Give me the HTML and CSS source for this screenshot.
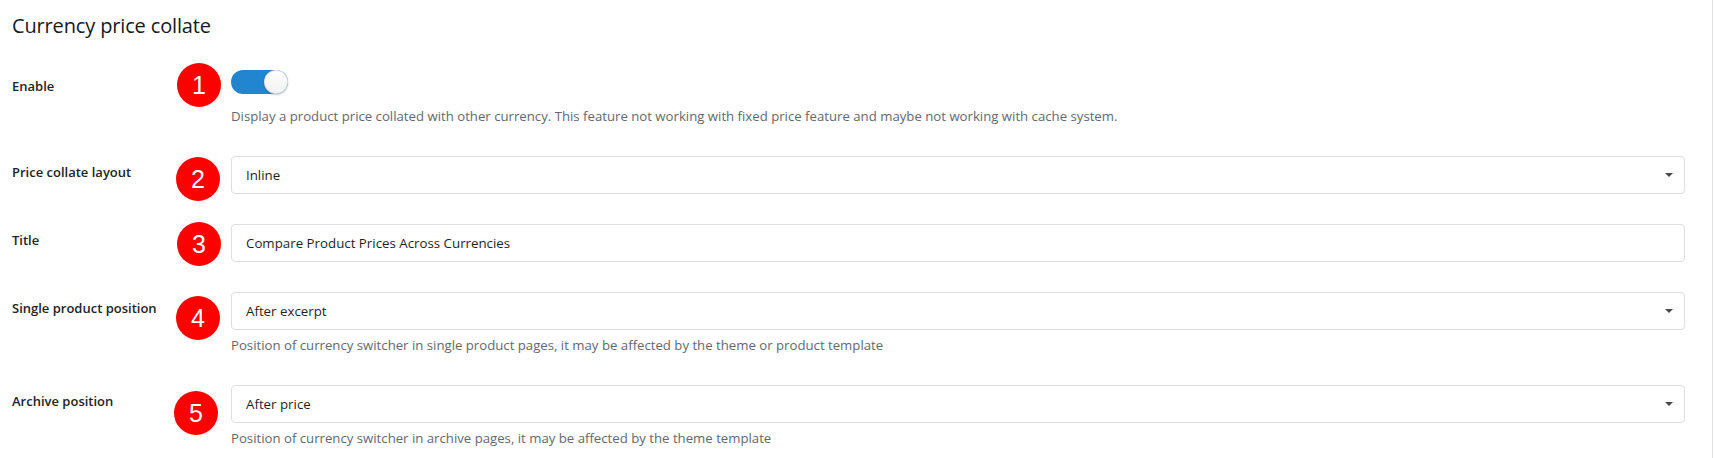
FILE: index.html
```html
<!DOCTYPE html>
<html>
<head>
<meta charset="utf-8">
<link rel="stylesheet" href="styles.css">
</head>
<body>
<div class="page">
  <h2 class="heading">Currency price collate</h2>

  <div class="row">
    <div class="label">Enable</div>
    <div class="field">
      <div class="toggle"><span class="knob"></span></div>
      <div class="desc desc-first">Display a product price collated with other currency. This feature not working with fixed price feature and maybe not working with cache system.</div>
    </div>
    <span class="marker m1">1</span>
  </div>

  <div class="row">
    <div class="label">Price collate layout</div>
    <div class="field">
      <div class="select">Inline<span class="caret"></span></div>
    </div>
    <span class="marker m2">2</span>
  </div>

  <div class="row">
    <div class="label">Title</div>
    <div class="field">
      <div class="input">Compare Product Prices Across Currencies</div>
    </div>
    <span class="marker m3">3</span>
  </div>

  <div class="row">
    <div class="label">Single product position</div>
    <div class="field">
      <div class="select">After excerpt<span class="caret"></span></div>
      <div class="desc">Position of currency switcher in single product pages, it may be affected by the theme or product template</div>
    </div>
    <span class="marker m4">4</span>
  </div>

  <div class="row">
    <div class="label">Archive position</div>
    <div class="field">
      <div class="select">After price<span class="caret"></span></div>
      <div class="desc">Position of currency switcher in archive pages, it may be affected by the theme template</div>
    </div>
    <span class="marker m5">5</span>
  </div>
</div>
</body>
</html>
```

FILE: styles.css
```css
html, body {
  margin: 0;
  padding: 0;
  background: #ffffff;
}

body {
  font-family: "Open Sans", "Noto Sans", sans-serif;
  color: #1d2327;
}

.page {
  width: 1713px;
  height: 458px;
  box-sizing: border-box;
  border-right: 1px solid #e2e2e2;
  padding: 0 27px 0 12px;
  overflow: hidden;
}

.heading {
  margin: 0;
  padding-top: 13px;
  height: 55px;
  box-sizing: border-box;
  font-size: 20px;
  line-height: 26px;
  font-weight: 500;
  color: #16191c;
  letter-spacing: -0.15px;
}

.row {
  position: relative;
  display: grid;
  grid-template-columns: 219px 1fr;
  padding: 15px 0;
}

.label {
  padding-top: 6px;
  font-size: 13px;
  line-height: 20px;
  font-weight: 600;
  color: #1d2327;
}

.field {
  display: flex;
  flex-direction: column;
}

.toggle {
  position: relative;
  width: 57px;
  height: 24px;
  border-radius: 12px;
  background: #2185d0;
}

.knob {
  position: absolute;
  top: 0;
  right: 0;
  width: 24px;
  height: 24px;
  border-radius: 50%;
  background: linear-gradient(#ffffff, #f1f1f1);
  box-shadow: 0 1px 2px rgba(34, 36, 38, 0.25), inset 0 0 0 1px rgba(34, 36, 38, 0.12);
}

.desc {
  margin-top: 5px;
  font-size: 13.2px;
  line-height: 20px;
  color: #646970;
}

.desc-first {
  margin-top: 12px;
}

.select, .input {
  position: relative;
  height: 38px;
  box-sizing: border-box;
  border: 1px solid #dedede;
  border-radius: 4px;
  padding: 0 14px;
  font-size: 13.3px;
  line-height: 36px;
  color: #1f1f1f;
  background: #fff;
}

.caret {
  position: absolute;
  right: 11px;
  top: 16px;
  width: 0;
  height: 0;
  border-left: 4px solid transparent;
  border-right: 4px solid transparent;
  border-top: 4px solid #4a4a4a;
}

.marker {
  position: absolute;
  left: 164px;
  width: 44px;
  height: 44px;
  border-radius: 50%;
  background: #ff0000;
  color: #ffffff;
  font-family: "Liberation Sans", Arial, sans-serif;
  font-size: 25px;
  line-height: 44px;
  text-align: center;
}

.m1 { top: 8px; left: 165px; }
.m2 { top: 16px; }
.m3 { top: 13px; left: 165px; }
.m4 { top: 19px; }
.m5 { top: 21px; left: 162px; }
```
